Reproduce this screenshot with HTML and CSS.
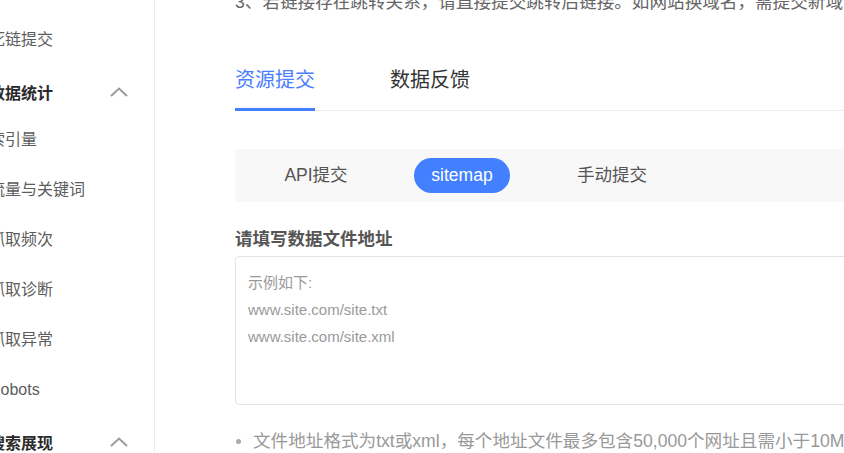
FILE: index.html
```html
<!DOCTYPE html>
<html lang="zh-CN">
<head>
<meta charset="utf-8">
<title>资源提交</title>
<link rel="stylesheet" href="styles.css">
</head>
<body>
<div class="layout">
  <aside class="sidebar">
    <ul class="nav">
      <li class="nav-item">死链提交</li>
      <li class="nav-head"><span>数据统计</span>
        <svg class="chev" width="18" height="10" viewBox="0 0 18 10"><polyline points="1,9 9,1.5 17,9" fill="none" stroke="#9a9a9a" stroke-width="2"/></svg>
      </li>
      <li class="nav-item">索引量</li>
      <li class="nav-item">流量与关键词</li>
      <li class="nav-item">抓取频次</li>
      <li class="nav-item">抓取诊断</li>
      <li class="nav-item">抓取异常</li>
      <li class="nav-item">Robots</li>
      <li class="nav-head"><span>搜索展现</span>
        <svg class="chev" width="18" height="10" viewBox="0 0 18 10"><polyline points="1,9 9,1.5 17,9" fill="none" stroke="#9a9a9a" stroke-width="2"/></svg>
      </li>
    </ul>
  </aside>
  <main class="main">
    <p class="note">3、若链接存在跳转关系，请直接提交跳转后链接。如网站换域名，需提交新域名资源</p>
    <div class="tabs">
      <div class="tab active">资源提交</div>
      <div class="tab">数据反馈</div>
    </div>
    <div class="segment">
      <div class="seg-item">API提交</div>
      <div class="seg-item on">sitemap</div>
      <div class="seg-item">手动提交</div>
    </div>
    <div class="label">请填写数据文件地址</div>
    <textarea class="input" placeholder="示例如下:&#10;www.site.com/site.txt&#10;www.site.com/site.xml"></textarea>
    <ul class="tips">
      <li>文件地址格式为txt或xml，每个地址文件最多包含50,000个网址且需小于10MB</li>
    </ul>
  </main>
</div>
</body>
</html>
```
FILE: styles.css
```css
html, body {
  margin: 0;
  padding: 0;
  overflow: hidden;
  background: #fff;
}
body {
  font-family: "Liberation Sans", "Noto Sans CJK SC", sans-serif;
  width: 844px;
  height: 453px;
}
.layout {
  display: flex;
  width: 844px;
  height: 453px;
  overflow: hidden;
}
.sidebar {
  flex: 0 0 154px;
  width: 154px;
  border-right: 1px solid #ebebeb;
  overflow: hidden;
  padding-top: 15px;
  box-sizing: content-box;
}
.nav {
  list-style: none;
  margin: 0 0 0 -11px;
  padding: 0;
}
.nav-item {
  height: 50px;
  line-height: 50px;
  font-size: 16px;
  color: #5c5c5c;
  white-space: nowrap;
}
.nav-head {
  display: flex;
  align-items: center;
  justify-content: space-between;
  height: 50px;
  padding-top: 2px;
  margin-bottom: -2px;
  padding-right: 26px;
  font-size: 16px;
  font-weight: bold;
  color: #2b2b2b;
  white-space: nowrap;
}
.chev {
  display: block;
}
.main {
  flex: 0 0 700px;
  margin-left: 80px;
  margin-top: -10px;
}
.note {
  margin: 0;
  font-size: 17.6px;
  line-height: 24px;
  color: #666;
  white-space: nowrap;
}
.tabs {
  display: flex;
  gap: 75px;
  margin-top: 52px;
  border-bottom: 1px solid #ececec;
}
.tab {
  font-size: 20px;
  line-height: 28px;
  padding-bottom: 14px;
  border-bottom: 3px solid transparent;
  margin-bottom: -1px;
  color: #333;
}
.tab.active {
  color: #4a7dff;
  border-bottom-color: #4280ff;
}
.segment {
  display: flex;
  align-items: center;
  gap: 50px;
  margin-top: 38px;
  height: 53px;
  padding-left: 32px;
  background: #f8f8f8;
}
.seg-item {
  width: 98px;
  height: 35px;
  line-height: 35px;
  text-align: center;
  font-size: 17.5px;
  color: #555;
  border-radius: 18px;
}
.seg-item.on {
  width: 96px;
  background: #4280ff;
  color: #fff;
  margin-left: -1px;
  margin-right: 3px;
}
.label {
  margin-top: 25px;
  font-size: 17.5px;
  line-height: 24px;
  font-weight: bold;
  color: #555;
}
.input {
  display: block;
  box-sizing: border-box;
  margin-top: 5px;
  width: 700px;
  height: 149px;
  padding: 12px 12px;
  border: 1px solid #e3e3e3;
  border-radius: 4px;
  font-family: "Liberation Sans", "Noto Sans CJK SC", sans-serif;
  font-size: 15px;
  line-height: 27px;
  resize: none;
  outline: none;
}
.input::placeholder {
  color: #9a9a9a;
}
.tips {
  list-style: none;
  margin: 24px 0 0;
  padding: 0;
}
.tips li {
  display: flex;
  align-items: center;
  font-size: 17.6px;
  line-height: 24px;
  color: #999;
  white-space: nowrap;
}
.tips li::before {
  content: "";
  width: 5px;
  height: 5px;
  border-radius: 50%;
  background: #aaa;
  margin-left: 1px;
  margin-right: 12px;
  flex: 0 0 5px;
}
```
